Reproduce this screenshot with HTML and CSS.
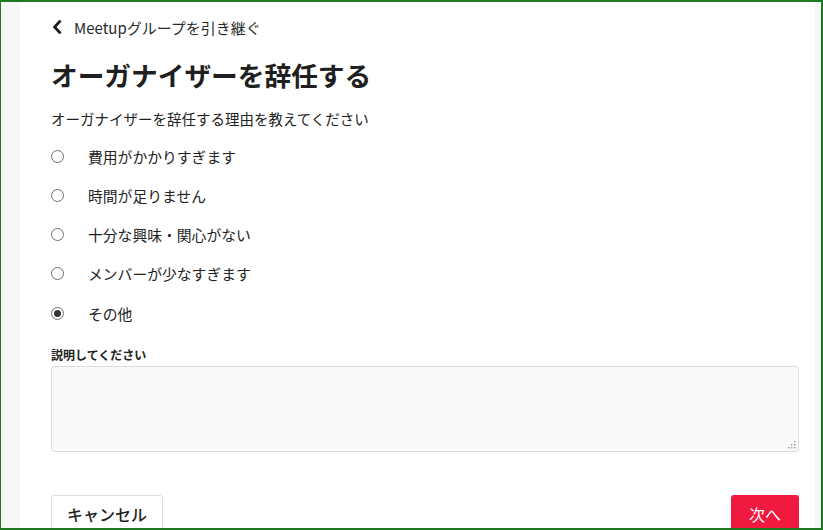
FILE: index.html
```html
<!DOCTYPE html>
<html lang="ja">
<head>
<meta charset="utf-8">
<title>オーガナイザーを辞任する</title>
<link rel="stylesheet" href="styles.css">
</head>
<body>
<div class="frame">
  <main class="panel">
    <a class="back" href="#">
      <svg class="chev" width="10" height="14" viewBox="0 0 10 14" aria-hidden="true"><path d="M7.6 1.6 L2.6 7 L7.6 12.4" fill="none" stroke="#1e1e1e" stroke-width="2.8" stroke-linecap="square"/></svg>
      <span>Meetupグループを引き継ぐ</span>
    </a>
    <h1 class="title">オーガナイザーを辞任する</h1>
    <p class="lead">オーガナイザーを辞任する理由を教えてください</p>
    <div class="options">
      <label class="opt"><input type="radio" name="r"><span>費用がかかりすぎます</span></label>
      <label class="opt"><input type="radio" name="r"><span>時間が足りません</span></label>
      <label class="opt"><input type="radio" name="r"><span>十分な興味・関心がない</span></label>
      <label class="opt"><input type="radio" name="r"><span>メンバーが少なすぎます</span></label>
      <label class="opt opt-last"><input type="radio" name="r" checked><span>その他</span></label>
    </div>
    <label class="fieldlabel" for="desc">説明してください</label>
    <div class="descwrap">
      <textarea id="desc" class="desc"></textarea>
      <svg class="grip" width="8" height="8" viewBox="0 0 8 8" aria-hidden="true">
        <rect x="6" y="0" width="1.4" height="1.4" fill="#9a9a9a"/>
        <rect x="3" y="3" width="1.4" height="1.4" fill="#9a9a9a"/>
        <rect x="6" y="3" width="1.4" height="1.4" fill="#9a9a9a"/>
        <rect x="0" y="6" width="1.4" height="1.4" fill="#9a9a9a"/>
        <rect x="3" y="6" width="1.4" height="1.4" fill="#9a9a9a"/>
        <rect x="6" y="6" width="1.4" height="1.4" fill="#9a9a9a"/>
      </svg>
    </div>
    <div class="actions">
      <button class="btn btn-cancel" type="button">キャンセル</button>
      <button class="btn btn-next" type="button">次へ</button>
    </div>
  </main>
</div>
</body>
</html>
```
FILE: styles.css
```css
* { box-sizing: border-box; }
html, body { margin: 0; padding: 0; }
body {
  width: 823px;
  height: 530px;
  overflow: hidden;
  font-family: "Noto Sans CJK JP", "Noto Sans", sans-serif;
  color: #222;
}
.frame {
  width: 823px;
  height: 530px;
  border-style: solid;
  border-color: #1f7a1f;
  border-width: 2px 2px 2px 1px;
  background: #f7f7f7;
  padding: 0 6px 0 19px;
  overflow: hidden;
}
.panel {
  background: #fff;
  height: 100%;
  padding: 15px 16px 0 31px;
  display: flex;
  flex-direction: column;
}
.panel > * { flex-shrink: 0; }
.back {
  display: flex;
  align-items: center;
  gap: 12px;
  height: 20px;
  color: #2a2a2a;
  text-decoration: none;
  font-size: 15px;
  padding-left: 1px;
}
.chev { display: block; }
.title {
  margin: 20px 0 0;
  font-size: 26.7px;
  line-height: 36px;
  font-weight: 700;
  color: #1f1f1f;
}
.lead {
  margin: 16px 0 0;
  font-size: 14.5px;
  line-height: 20px;
  color: #222;
}
.options {
  margin-top: 8px;
  display: flex;
  flex-direction: column;
}
.opt {
  display: flex;
  align-items: center;
  height: 39px;
  font-size: 14.8px;
  color: #222;
}
.opt-last { height: 40px; padding-top: 1px; }
.opt input {
  appearance: none;
  -webkit-appearance: none;
  width: 13px;
  height: 13px;
  margin: 0 24px 0 0;
  border: 1px solid #6e6e6e;
  border-radius: 50%;
  background: #fff;
  display: grid;
  place-content: center;
}
.opt input:checked::before {
  content: "";
  width: 7px;
  height: 7px;
  border-radius: 50%;
  background: #333;
}
.fieldlabel {
  margin-top: 14px;
  font-size: 12px;
  line-height: 16px;
  font-weight: 700;
  color: #222;
}
.descwrap {
  position: relative;
  margin-top: 3px;
  width: 748px;
  height: 86px;
}
.desc {
  display: block;
  width: 100%;
  height: 100%;
  margin: 0;
  background: #f9f9f9;
  border: 1px solid #dcdcdc;
  border-radius: 3px;
  resize: none;
  font: inherit;
}
.grip {
  position: absolute;
  right: 3px;
  bottom: 3px;
}
.actions {
  margin-top: 43px;
  display: flex;
  justify-content: space-between;
  width: 748px;
}
.btn {
  font-family: "Noto Sans CJK JP", sans-serif;
  font-size: 16px;
  height: 38px;
  padding: 0;
  border-radius: 3px;
  cursor: pointer;
}
.btn-cancel {
  width: 112px;
  background: #fff;
  border: 1px solid #dedede;
  color: #222;
  font-weight: 500;
}
.btn-next {
  width: 68px;
  background: #f0193f;
  border: none;
  color: #fff;
}
```
